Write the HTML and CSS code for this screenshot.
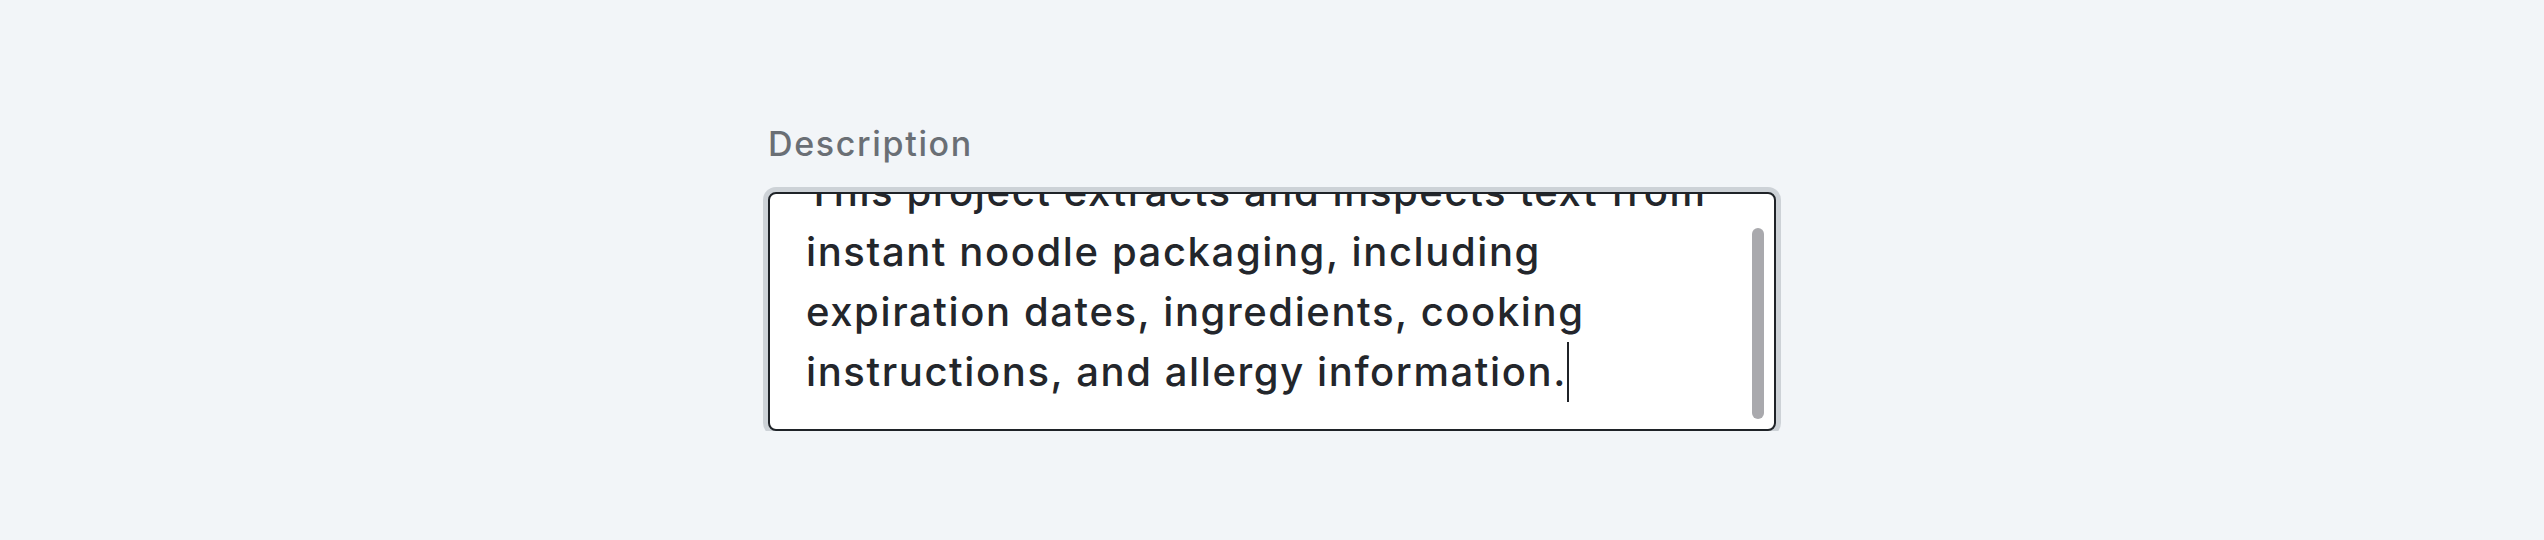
FILE: index.html
```html
<!DOCTYPE html>
<html lang="en">
<head>
  <meta charset="UTF-8">
  <meta name="viewport" content="width=device-width, initial-scale=1.0">
  <title>Description</title>
  <link rel="stylesheet" href="styles.css">
</head>
<body>
  <main class="field">
    <label class="field-label" for="description">Description</label>

    <!-- Multi-line input, scrolled down a little with the caret at the end -->
    <div class="textbox" id="description">
      <div class="textbox-content">
        <span class="line">This project extracts and inspects text from</span>
        <span class="line">instant noodle packaging, including</span>
        <span class="line">expiration dates, ingredients, cooking</span>
        <span class="line">instructions, and allergy information.<span class="caret"></span></span>
      </div>
      <div class="scroll-thumb"></div>
    </div>
  </main>
</body>
</html>
```

FILE: styles.css
```css
body {
  margin: 0;
  padding-top: 123px;
  background-color: #f2f5f8;
  font-family: Inter, "Noto Sans", sans-serif;
  color: #23262b;
}

.field {
  width: 1008px;
  margin: 0 auto;
  display: flex;
  flex-direction: column;
}

.field-label {
  font-size: 34px;
  line-height: 42px;
  font-weight: 500;
  letter-spacing: 1.65px;
  color: #6a6f75;
  margin-bottom: 27px;
}

.textbox {
  position: relative;
  height: 239px;
  box-sizing: border-box;
  border: 2px solid #1f2328;
  border-radius: 8px;
  background-color: #ffffff;
  box-shadow: 0 0 0 5px #cdd2d7;
  overflow: hidden;
}

.textbox-content {
  margin-top: -32px;
  padding: 0 60px 0 36px;
  font-size: 40px;
  line-height: 60px;
  font-weight: 550;
  letter-spacing: 1.6px;
}

.line {
  display: block;
  white-space: nowrap;
}

.caret {
  display: inline-block;
  width: 2px;
  height: 60px;
  vertical-align: top;
  background-color: #1f2328;
}

/* Overlay scrollbar thumb */
.scroll-thumb {
  position: absolute;
  top: 34px;
  right: 10px;
  width: 12px;
  height: 191px;
  border-radius: 6px;
  background-color: #a9a9ad;
}
```
